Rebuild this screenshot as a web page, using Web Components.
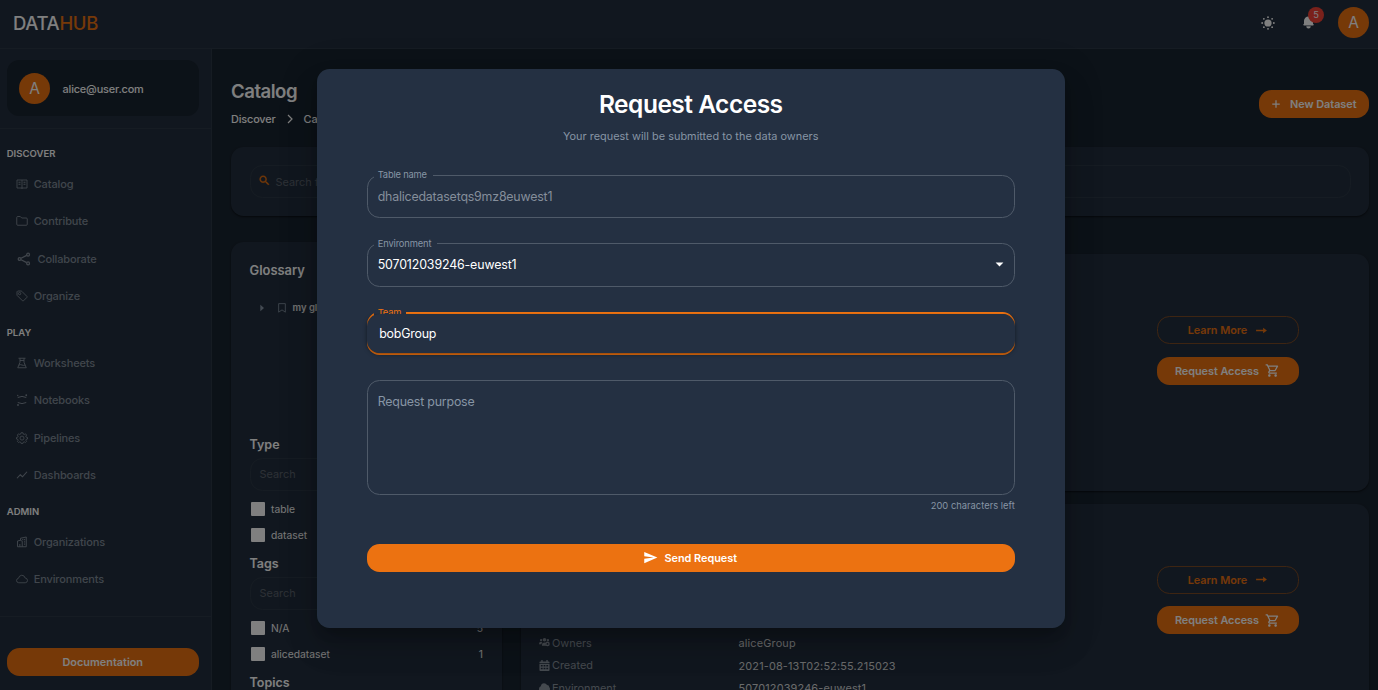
<!DOCTYPE html>
<html lang="en">
<head>
<meta charset="utf-8">
<title>DataHub</title>
<style>
html,body{margin:0;height:100%;overflow:hidden}
body{
  --bg:#192430;--paper:#232f3e;--modal:#243042;--line:#2d3947;
  --orange:#ec7211;--text:#fff;--muted:#8795a5;--nav:#818c99;--dim:#8b949f;
  background:var(--bg);color:var(--text);font:400 11px/16px Inter,"Open Sans",sans-serif;
}
</style>
</head>
<body>
<dh-app></dh-app>
<script>
const ICONS = {
  catalog:['0 0 24 24','<g fill="none" stroke="currentColor" stroke-width="1.7"><path d="M2 4h20v16H2zM12 4v18"/><path d="M5 8.500h4M5 12.500h4M15 8.500h4M15 12.500h4" stroke-width="2"/></g>'],
  folder:['0 0 24 24','<path fill="none" stroke="currentColor" stroke-width="1.8" stroke-linejoin="round" d="M1.500 5q0-2 2-2h5l3 3h9q2 0 2 2v10.500q0 2-2 2h-17q-2 0-2-2z"/>'],
  share:['0 0 24 24','<g fill="none" stroke="currentColor" stroke-width="2.200"><circle cx="19" cy="4.500" r="2.400"/><circle cx="4.500" cy="12" r="2.400"/><circle cx="19" cy="19.500" r="2.400"/><path d="M7 10.800 16.600 5.800M7 13.200l9.600 5"/></g>'],
  tag:['0 0 24 24','<g fill="none" stroke="currentColor" stroke-width="1.8" stroke-linejoin="round"><path d="M2 3.5 3.5 2H10q1 0 1.8.8l10 10q1 1 0 2l-6.800 6.800q-1 1-2 0l-10-10Q2 10.800 2 10z"/><circle cx="7.200" cy="7.200" r="2.300"/></g>'],
  flask:['0 0 24 24','<path fill="none" stroke="currentColor" stroke-width="1.9" d="M5 2.500h14M8 2.500v8L3.500 21.500h17L16 10.500V2.500M6 16q3-1.500 6 0t6 0M8 7h8"/>'],
  jupyter:['0 0 24 24','<g fill="none" stroke="currentColor" stroke-width="2"><path d="M3.500 7q8.500-4.500 17 0M3.500 17q8.500 4.500 17 0"/></g><g fill="currentColor"><circle cx="20.500" cy="2.500" r="1.800"/><circle cx="3.500" cy="3" r="1.300"/><circle cx="4" cy="22" r="1.800"/></g>'],
  gear:['0 0 24 24','<g fill="none" stroke="currentColor" stroke-width="1.700" stroke-linejoin="round"><path d="m10 1.500-.800 2.800-1.700.7L5 3.600 2.800 6.100 4.300 8.600 3.600 10.200 1 11v3l2.700.8.7 1.700-1.500 2.400L5.100 21l2.500-1.400 1.700.7.700 2.500h4l.7-2.500 1.700-.7 2.500 1.400 2.200-2.200-1.500-2.400.7-1.600L23 14v-3l-2.700-.8-.700-1.600 1.500-2.500L19 3.600 16.400 5l-1.700-.7L14 1.500z"/><circle cx="12" cy="12.200" r="4"/></g>'],
  trend:['0 0 24 24','<path fill="none" stroke="currentColor" stroke-width="2.200" d="m2 18.500 6.500-7 4.500 4L22 5.500"/>'],
  org:['0 0 24 24','<g fill="none" stroke="currentColor" stroke-width="1.900"><path d="M9 9V4.500L20.500 2v19.500H3V10l6-1.500 3.500 2v11M7.700 21.500V16"/></g><path fill="currentColor" d="M12.500 6h2v2.300h-2zm3.700 0h2v2.300h-2zm0 4.500h2v2.300h-2zm0 4.500h2v2.300h-2z"/>'],
  cloud:['0 0 24 24','<path fill="none" stroke="currentColor" stroke-width="1.700" d="M5.500 19.500q-4.500-.5-4.500-4.500 0-3.500 4-4.500Q6 5 11.500 4.500 17 4.500 18.300 10q4.700.5 4.700 5 0 4-4.500 4.500z"/>'],
  sun:['0 0 24 24','<g fill="currentColor"><circle cx="12" cy="12" r="6.200"/><circle cx="12" cy="2" r="1.600"/><circle cx="12" cy="22" r="1.600"/><circle cx="2" cy="12" r="1.600"/><circle cx="22" cy="12" r="1.600"/><circle cx="4.900" cy="4.900" r="1.600"/><circle cx="19.100" cy="4.900" r="1.600"/><circle cx="4.900" cy="19.100" r="1.600"/><circle cx="19.100" cy="19.100" r="1.600"/></g>'],
  bell:['0 0 20 20','<path fill="currentColor" d="M10 2a6 6 0 00-6 6v3.586l-.707.707A1 1 0 004 14h12a1 1 0 00.707-1.707L16 11.586V8a6 6 0 00-6-6zM10 18a3 3 0 01-3-3h6a3 3 0 01-3 3z"/>'],
  chevron:['0 0 24 24','<path fill="none" stroke="currentColor" stroke-width="2.400" d="m8 4 8 8-8 8"/>'],
  search:['0 0 24 24','<path fill="currentColor" d="M15.500 14h-.790l-.280-.270C15.410 12.590 16 11.110 16 9.500 16 5.910 13.090 3 9.500 3S3 5.910 3 9.500 5.910 16 9.500 16c1.610 0 3.090-.590 4.230-1.570l.270.280v.790l5 4.990L20.490 19l-4.990-5zm-6 0C7.010 14 5 11.990 5 9.500S7.010 5 9.500 5 14 7.010 14 9.500 11.990 14 9.500 14z" stroke="currentColor" stroke-width=".6"/>'],
  plus:['0 0 24 24','<path fill="currentColor" d="M10.500 3h3v7.500H21v3h-7.500V21h-3v-7.500H3v-3h7.500z"/>'],
  arrow:['0 0 24 24','<path fill="currentColor" d="M15 10.600H2v2.800h13V17l7-5-7-5z"/>'],
  cart:['0 0 24 24','<path fill="currentColor" d="M15.550 13c.750 0 1.410-.410 1.750-1.030l3.580-6.490A.996.996 0 0020.010 4H5.210l-.940-2H1v2h2l3.600 7.590-1.350 2.440C4.520 15.370 5.480 17 7 17h12v-2H7l1.100-2h7.450zM6.160 6h12.150l-2.760 5H8.530L6.160 6zM7 18c-1.100 0-1.990.900-1.990 2S5.900 22 7 22s2-.900 2-2-.900-2-2-2zm10 0c-1.100 0-1.990.900-1.990 2s.890 2 1.990 2 2-.900 2-2-.900-2-2-2z"/>'],
  send:['0 0 24 24','<path fill="currentColor" d="M2.010 21 23 12 2.010 3 2 10l15 2-15 2z"/>'],
  bookmark:['0 0 24 24','<path fill="none" stroke="currentColor" stroke-width="2" d="M4 1.500h16V22l-8-5.500L4 22z"/>'],
  play:['0 0 24 24','<path fill="currentColor" d="M7 2v20l11-10z"/>'],
  caret:['0 0 24 24','<path fill="currentColor" d="m3.500 7.500 8.500 9 8.500-9z"/>'],
  users:['0 0 24 24','<g fill="currentColor"><circle cx="4.500" cy="7" r="2.500"/><circle cx="12" cy="6" r="4"/><circle cx="19.500" cy="7" r="2.500"/><path d="M0 15q0-4.500 4.500-4.500 2 0 3 1Q5.500 13 5.200 16H0zM6.500 19v-2q0-5 5.500-5 2 0 3.500 1-2 3 0 6z"/></g><circle cx="18.500" cy="15" r="3.500" fill="none" stroke="currentColor" stroke-width="3"/>'],
  calendar:['0 0 24 24','<path fill="currentColor" fill-rule="evenodd" d="M5 0h3v3h8V0h3v3h2q2 0 2 2v2H1V5q0-2 2-2h2zM1 8.500h22V22q0 2-2 2H3q-2 0-2-2zM4 11v3h4v-3zm6 0v3h4v-3zm6 0v3h4v-3zM4 17v3h4v-3zm6 0v3h4v-3zm6 0v3h4v-3z"/>'],
  cloudsolid:['0 0 24 24','<path fill="currentColor" d="M6 21q-6-.5-6-6 0-4 4-5.500Q5 2.500 11 2.500q4.500 0 6.500 4 4.500 0 5 5 1.500 1 1.500 3.500 0 5.500-5 6z"/>']
};

function define(name, render) {
  customElements.define(name, class extends HTMLElement {
    connectedCallback() {
      if (this.shadowRoot) return;
      const t = document.createElement('template');
      t.innerHTML = render(this);
      this.attachShadow({mode:'open'}).appendChild(t.content.cloneNode(true));
    }
  });
}
const at = (e, n, d='') => e.getAttribute(n) ?? d;

define('dh-icon', e => {
  const [vb, body] = ICONS[at(e,'name')];
  const s = at(e,'size','12');
  return `<style>:host{display:block;flex:none;width:${s}px;height:${s}px}svg{display:block}</style>
  <svg width="${s}" height="${s}" viewBox="${vb}">${body}</svg>`;
});

define('dh-avatar', () => `<style>
:host{display:flex;flex:none;width:31px;height:31px;border-radius:50%;background:var(--orange);
align-items:center;justify-content:center;font-size:15.500px;font-weight:400;line-height:31px;letter-spacing:0}</style><slot></slot>`);

define('dh-button', e => `<style>
:host{display:flex;box-sizing:border-box;flex:none;height:28px;border-radius:12.500px;align-items:center;justify-content:center;
gap:${at(e,'gap','8')}px;font-weight:600;font-size:10.900px;letter-spacing:var(--track,0);white-space:nowrap;background:var(--orange);color:#fff}
:host([outlined]){background:none;border:1px solid #7d4a25;color:var(--orange)}
</style><slot></slot>`);

define('dh-topbar', () => `<style>
:host{display:flex;box-sizing:border-box;height:49px;flex:none;align-items:center;background:var(--paper);border-bottom:1px solid var(--line);padding:0 9px 3px 13px}
.logo{flex:1;font-size:18.500px;font-weight:500;line-height:24px;letter-spacing:-.35px;padding-top:1px}
.logo b{font-weight:500;color:var(--orange)}
.bell{position:relative;margin:0 22px 0 26px}
.badge{position:absolute;left:7px;top:-8px;width:16px;height:16px;border-radius:8px;background:#f44336;font-size:9.300px;line-height:16px;text-align:center}
</style>
<div class="logo">DATA<b>HUB</b></div>
<dh-icon name="sun" size="14"></dh-icon>
<div class="bell"><dh-icon name="bell" size="15"></dh-icon><div class="badge">5</div></div>
<dh-avatar>A</dh-avatar>`);

define('dh-nav-item', e => `<style>
:host{display:flex;align-items:center;height:37.350px;padding-left:${at(e,'indent','15.500')}px;gap:${at(e,'gap','6.200')}px;color:var(--nav);font-size:11px;font-weight:500;letter-spacing:-.13px}
</style><dh-icon name="${at(e,'icon')}" size="${at(e,'size','12')}"></dh-icon><slot></slot>`);

define('dh-nav-section', e => `<style>
:host{display:block}
h2{margin:0;padding:11px 0 5.500px 6.700px;font-size:9.500px;line-height:13px;font-weight:600;letter-spacing:.05px}
</style><h2>${at(e,'heading')}</h2><slot></slot>`);

define('dh-sidebar', () => `<style>
:host{display:flex;flex-direction:column;box-sizing:border-box;width:212px;flex:none;background:var(--paper);border-right:1px solid var(--line)}
.user{display:flex;flex:none;align-items:center;gap:12.500px;box-sizing:border-box;height:56px;margin:11px 12px 12px 7px;padding-left:12px;background:var(--bg);border-radius:12px;font-weight:500;font-size:10.900px;letter-spacing:-.15px}
.user span{padding-top:1px}
nav{border:solid var(--line);border-width:1px 0;height:489px;flex:none;box-sizing:border-box;padding-top:6.800px}
dh-button{margin:31px 12px 0 6.500px}
</style>
<div class="user"><dh-avatar>A</dh-avatar><span>alice@user.com</span></div>
<nav>
<dh-nav-section heading="DISCOVER">
<dh-nav-item icon="catalog">Catalog</dh-nav-item>
<dh-nav-item icon="folder">Contribute</dh-nav-item>
<dh-nav-item icon="share" size="14" indent="16.500" gap="7">Collaborate</dh-nav-item>
<dh-nav-item icon="tag">Organize</dh-nav-item>
</dh-nav-section>
<dh-nav-section heading="PLAY">
<dh-nav-item icon="flask">Worksheets</dh-nav-item>
<dh-nav-item icon="jupyter">Notebooks</dh-nav-item>
<dh-nav-item icon="gear">Pipelines</dh-nav-item>
<dh-nav-item icon="trend">Dashboards</dh-nav-item>
</dh-nav-section>
<dh-nav-section heading="ADMIN">
<dh-nav-item icon="org">Organizations</dh-nav-item>
<dh-nav-item icon="cloud">Environments</dh-nav-item>
</dh-nav-section>
</nav>
<dh-button>Documentation</dh-button>`);

define('dh-card', () => `<style>
:host{display:block;box-sizing:border-box;background:var(--paper);border-radius:12.500px;box-shadow:0 1px 2px rgba(0,0,0,.55)}
</style><slot></slot>`);

define('dh-search', e => `<style>
:host{display:flex;align-items:center;box-sizing:border-box;height:33px;border:1px solid var(--line);border-radius:12.500px;padding-left:${at(e,'pad','9')}px;gap:5px;color:#5b626d;font-size:10.900px}
dh-icon{color:var(--orange);margin-top:-2px}
</style>${e.hasAttribute('icon')?'<dh-icon name="search" size="13"></dh-icon>':''}<span>${at(e,'label')}</span>`);

define('dh-check', e => `<style>
:host{display:flex;align-items:center;height:25.700px;padding:0 19px 0 1.500px;font-size:10.300px}
i{width:14px;height:14px;border-radius:1px;background:#fff;margin-right:6px}
span{flex:1}
:host,b{font-weight:400;color:#f0f0f0}
</style><i></i><span><slot></slot></span><b>${at(e,'count')}</b>`);

define('dh-filters', () => `<style>
:host{display:flex;flex-direction:column;box-sizing:border-box;height:520px;padding:20.600px 0 0 18.500px}
h3{margin:0;font-size:12.500px;line-height:18px;font-weight:600}
h3.top{font-size:12.900px}
.tree{display:flex;align-items:center;height:18px;margin:19px 0 119px 8px;font-size:9.500px;font-weight:600;color:#e0e0e0}
.tree dh-icon{color:var(--muted)}
.tree dh-icon+dh-icon{margin:0 6px 0 11px}
dh-search{margin:3.400px 19px 5.700px 0}
h3.next{margin-top:7.600px}
</style>
<h3 class="top">Glossary</h3>
<div class="tree"><dh-icon name="play" size="8"></dh-icon><dh-icon name="bookmark" size="10"></dh-icon>my glossary</div>
<h3>Type</h3>
<dh-search label="Search"></dh-search>
<dh-check>table</dh-check><dh-check>dataset</dh-check>
<h3 class="next">Tags</h3>
<dh-search label="Search"></dh-search>
<dh-check count="5">N/A</dh-check><dh-check count="1">alicedataset</dh-check>
<h3 class="next">Topics</h3>`);

define('dh-fact', e => `<style>
:host{display:grid;grid-template-columns:13px 186.500px 1fr;height:22.400px;align-items:center;font-size:10.900px;color:#d4d6d8}
.k{color:var(--dim)}.v{letter-spacing:.16px;padding-top:1px}dh-icon{color:var(--dim)}
</style><dh-icon name="${at(e,'icon')}" size="11"></dh-icon><span class="k">${at(e,'label')}</span><span class="v"><slot></slot></span>`);

define('dh-dataset', () => `<style>
:host{display:grid;grid-template-columns:635.700px 142px;height:237px;box-sizing:border-box}
.facts{padding:128px 0 0 18px}
.actions{display:flex;flex-direction:column;gap:12.500px;padding-top:61.800px}
dh-button{--track:-.05px}
</style>
<div class="facts"><slot></slot></div>
<div class="actions">
<dh-button outlined gap="7.500">Learn More<dh-icon name="arrow" size="13"></dh-icon></dh-button>
<dh-button gap="6.500">Request Access<dh-icon name="cart" size="15"></dh-icon></dh-button>
</div>`);

define('dh-catalog', () => `<style>
:host{display:flex;flex-direction:column;flex:1;min-width:0;padding:31px 9px 0 19px}
.head{display:flex;flex:none;justify-content:space-between;height:67px}
h1{margin:0;font-size:18.600px;line-height:23px;font-weight:600;letter-spacing:-.5px}
.crumbs{display:flex;align-items:center;gap:8px;font-weight:500;font-size:10.900px;margin-top:8px;letter-spacing:-.15px}
.head dh-button{width:110.500px;margin-top:10px;--track:-.05px}
.search{height:69px;flex:none;padding:18px 18.500px 0 18.500px}
.body{display:grid;flex:none;grid-template-columns:271px 848px;gap:19px;margin-top:25.800px;align-items:start}
.list{display:flex;flex-direction:column;gap:12.500px;padding-top:12.500px}
</style>
<div class="head">
<div><h1>Catalog</h1><div class="crumbs"><span>Discover</span><dh-icon name="chevron" size="12"></dh-icon><span>Catalog</span></div></div>
<dh-button gap="9"><dh-icon name="plus" size="10"></dh-icon>New Dataset</dh-button>
</div>
<dh-card class="search"><dh-search icon pad="7" label="Search for datasets"></dh-search></dh-card>
<div class="body">
<dh-card><dh-filters></dh-filters></dh-card>
<div class="list">
<dh-card><dh-dataset></dh-dataset></dh-card>
<dh-card><dh-dataset>
<dh-fact icon="users" label="Owners">aliceGroup</dh-fact>
<dh-fact icon="calendar" label="Created">2021-08-13T02:52:55.215023</dh-fact>
<dh-fact icon="cloudsolid" label="Environment">507012039246-euwest1</dh-fact>
</dh-dataset></dh-card>
</div>
</div>`);

define('dh-field', e => `<style>
:host{display:flex;position:relative;box-sizing:border-box;height:43.300px;border:1px solid #4f5a69;border-radius:12.500px;align-items:center;padding:0 9px 0 10px;font-size:12.400px;letter-spacing:-.2px}
label{position:absolute;left:6px;top:-8px;height:14px;padding:0 6px 0 4px;background:var(--modal);font-size:9.350px;line-height:14px;color:var(--muted);overflow:hidden;white-space:nowrap}
.in{flex:1;padding-top:1px}
:host([disabled]) .in{color:#858e9b}
:host([select]){letter-spacing:-.14px}
:host([select]) label{top:-7.500px}
:host([focused]){border:2px solid var(--orange);padding-left:0}
:host([focused]) label{color:var(--orange);left:5px;padding-right:5px;top:-8px}
:host([focused]) .in{position:absolute;left:-2px;right:-2px;top:0;bottom:0;border-radius:12.500px;background:var(--modal);box-shadow:0 1px 4px rgba(0,0,0,.5);clip-path:inset(0 -6px -6px -6px);padding-left:12.500px;display:flex;align-items:center}
:host([area]){height:115px;align-items:flex-start;padding-top:11px;color:var(--muted);line-height:18px}
</style>${at(e,'label')?`<label>${at(e,'label')}</label>`:''}<div class="in"><slot></slot></div>${e.hasAttribute('select')?'<dh-icon name="caret" size="11"></dh-icon>':''}`);

define('dh-modal', () => `<style>
:host{position:absolute;inset:0;background:rgba(0,0,0,.5);display:flex;justify-content:center;align-items:flex-start;padding:69px 0 0 3.500px;box-sizing:border-box}
.paper{box-sizing:border-box;width:747.500px;height:558.600px;border-radius:12.500px;background:var(--modal);padding:19.500px 49.700px 0;display:flex;flex-direction:column;
box-shadow:0 9px 12px -5px rgba(0,0,0,.2),0 19px 30px 2px rgba(0,0,0,.14),0 7px 36px 6px rgba(0,0,0,.12)}
h2{margin:0;text-align:center;font-size:24.500px;line-height:30px;font-weight:600;letter-spacing:-.5px}
p{margin:9.500px 0 30.900px;text-align:center;font-size:10.900px;line-height:16px;color:var(--muted);letter-spacing:.02px}
form{display:flex;flex-direction:column;gap:25.100px;margin:0}
small{display:block;text-align:right;font-size:9.350px;line-height:13px;margin:3.600px 0 31.900px;color:var(--muted);letter-spacing:.02px}
dh-button{--track:-.04px;padding-right:2px}
</style>
<div class="paper">
<h2>Request Access</h2>
<p>Your request will be submitted to the data owners</p>
<form>
<dh-field label="Table name" disabled>dhalicedatasetqs9mz8euwest1</dh-field>
<dh-field label="Environment" select>507012039246-euwest1</dh-field>
<dh-field label="Team" focused>bobGroup</dh-field>
<dh-field area>Request purpose</dh-field>
</form>
<small>200 characters left</small>
<dh-button gap="7"><dh-icon name="send" size="15"></dh-icon>Send Request</dh-button>
</div>`);

define('dh-app', () => `<style>
:host{display:flex;flex-direction:column;position:relative;height:690px;overflow:hidden}
main{display:flex;flex:1;min-height:0}
</style>
<dh-topbar></dh-topbar>
<main><dh-sidebar></dh-sidebar><dh-catalog></dh-catalog></main>
<dh-modal></dh-modal>`);
</script>
</body>
</html>
